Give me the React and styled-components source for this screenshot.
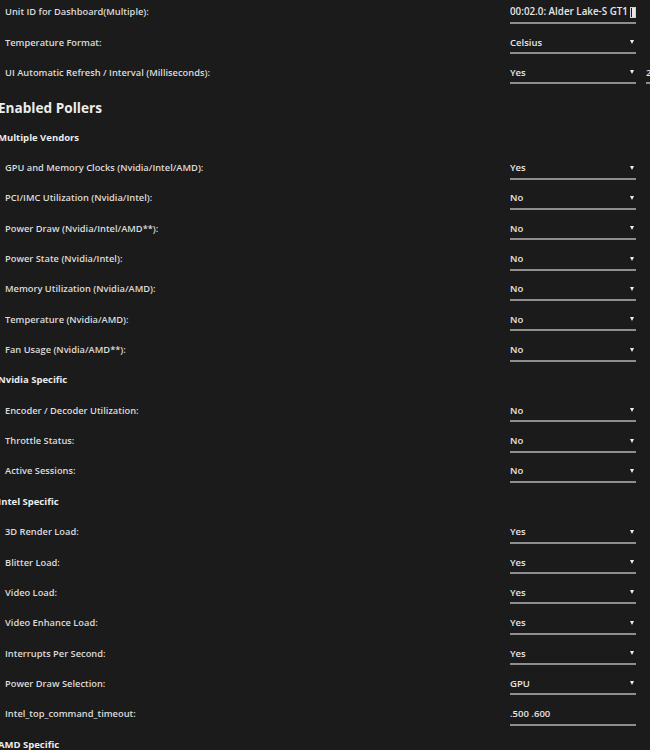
import React from "react";
import styled, { createGlobalStyle } from "styled-components";

const Global = createGlobalStyle`
  html, body {
    margin: 0;
    padding: 0;
    background: #1b1b1b;
    overflow: hidden;
  }
  body {
    font-family: "Open Sans", "Noto Sans", sans-serif;
    color: #dedede;
  }
`;

const Page = styled.div`
  width: 700px;
  margin: -3.5px 0 0 -2px;
`;

const Row = styled.div`
  display: grid;
  grid-template-columns: 512px 126px auto;
  align-items: center;
  height: 30.35px;
`;

const Label = styled.div`
  padding-left: 7px;
  font-size: 9.3px;
  font-weight: 600;
  color: #dcdcdc;
  white-space: nowrap;
`;

const Title = styled.h2`
  margin: 0;
  height: 34.5px;
  display: flex;
  align-items: center;
  padding-top: 5px;
  box-sizing: border-box;
  font-size: 13.6px;
  font-weight: 700;
  color: #ececec;
`;

const Group = styled.h3`
  margin: 0;
  height: 30.35px;
  display: flex;
  align-items: center;
  font-size: 9.5px;
  font-weight: 700;
  color: #ececec;
`;

const Box = styled.div`
  position: relative;
  display: flex;
  align-items: center;
  box-sizing: border-box;
  height: 22px;
  width: ${(p) => p.$w || "126px"};
  border-bottom: 2px solid #8e8e8e;
  font-size: ${(p) => p.$fs || "9.5px"};
  font-weight: 600;
  color: #e6e6e6;
  white-space: nowrap;
  overflow: hidden;
  margin-top: 2px;
`;

const Arrow = styled.span`
  position: absolute;
  right: 2px;
  top: 8px;
  width: 0;
  height: 0;
  border-left: 2.5px solid transparent;
  border-right: 2.5px solid transparent;
  border-top: 4px solid #f0f0f0;
`;

const Scroll = styled.span`
  position: absolute;
  right: 0;
  top: 5px;
  width: 4px;
  height: 9px;
  border: 1px solid #cfcfcf;
  background: linear-gradient(to right, #1b1b1b 0 1px, #e8e8e8 1px);
`;

const Clip = styled.span`
  display: block;
  width: 120px;
  overflow: hidden;
`;

const Extra = styled.div`
  margin-left: 10px;
`;

function Select({ value }) {
  return (
    <Box>
      {value}
      <Arrow />
    </Box>
  );
}

function Field({ label, value, input, children }) {
  return (
    <Row>
      <Label>{label}</Label>
      {children || (input ? <Box>{value}</Box> : <Select value={value} />)}
    </Row>
  );
}

const multi = [
  ["GPU and Memory Clocks (Nvidia/Intel/AMD):", "Yes"],
  ["PCI/IMC Utilization (Nvidia/Intel):", "No"],
  ["Power Draw (Nvidia/Intel/AMD**):", "No"],
  ["Power State (Nvidia/Intel):", "No"],
  ["Memory Utilization (Nvidia/AMD):", "No"],
  ["Temperature (Nvidia/AMD):", "No"],
  ["Fan Usage (Nvidia/AMD**):", "No"],
];
const nvidia = [
  ["Encoder / Decoder Utilization:", "No"],
  ["Throttle Status:", "No"],
  ["Active Sessions:", "No"],
];
const intel = [
  ["3D Render Load:", "Yes"],
  ["Blitter Load:", "Yes"],
  ["Video Load:", "Yes"],
  ["Video Enhance Load:", "Yes"],
  ["Interrupts Per Second:", "Yes"],
  ["Power Draw Selection:", "GPU"],
];

export default function App() {
  return (
    <>
      <Global />
      <Page>
        <Field label="Unit ID for Dashboard(Multiple):">
          <Box $fs="9.8px">
            <Clip>00:02.0: Alder Lake-S GT1 [UHD Graphics 730]</Clip>
            <Scroll />
          </Box>
        </Field>
        <Field label="Temperature Format:" value="Celsius" />
        <Row>
          <Label>UI Automatic Refresh / Interval (Milliseconds):</Label>
          <Select value="Yes" />
          <Extra>
            <Box $w="60px">2000</Box>
          </Extra>
        </Row>
        <Title>Enabled Pollers</Title>
        <Group>Multiple Vendors</Group>
        {multi.map(([l, v]) => (
          <Field key={l} label={l} value={v} />
        ))}
        <Group>Nvidia Specific</Group>
        {nvidia.map(([l, v]) => (
          <Field key={l} label={l} value={v} />
        ))}
        <Group>Intel Specific</Group>
        {intel.map(([l, v]) => (
          <Field key={l} label={l} value={v} />
        ))}
        <Field label="Intel_top_command_timeout:" value=".500 .600" input />
        <Group>AMD Specific</Group>
      </Page>
    </>
  );
}
